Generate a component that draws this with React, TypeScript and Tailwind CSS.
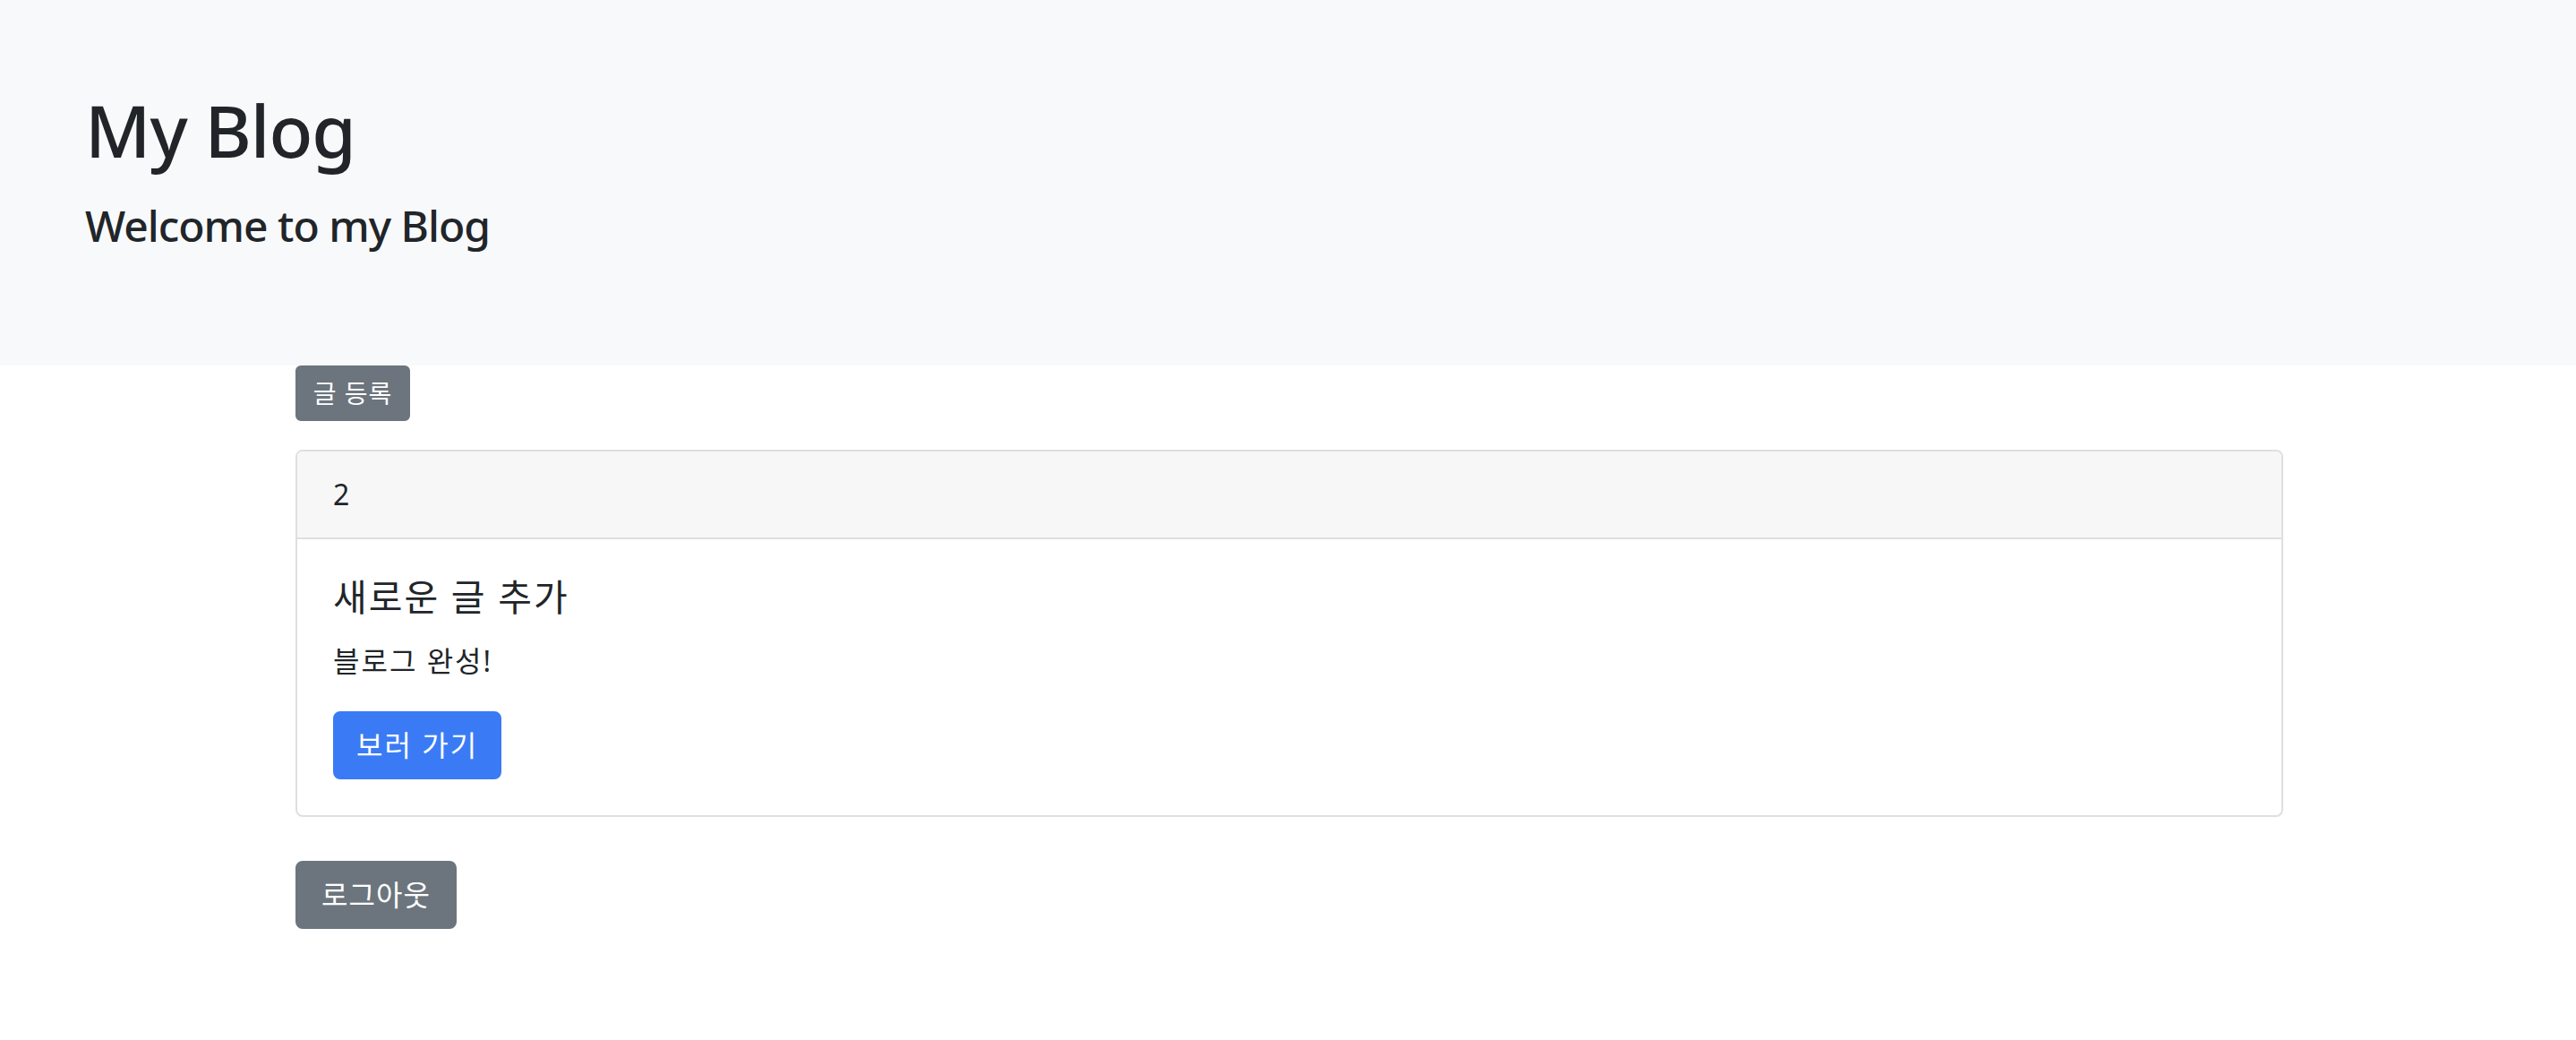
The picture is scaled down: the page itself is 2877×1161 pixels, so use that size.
export default function App() {
  const font = { fontFamily: '"Noto Sans", "Noto Sans CJK KR", sans-serif' }
  return (
    <div className="min-h-[1161px] bg-white text-[#212529]" style={font}>
      {/* Jumbotron */}
      <header className="h-[408px] bg-[#f8f9fa] pl-[95px] pt-[97px]">
        <h1 className="text-[80px] leading-[96px] font-medium tracking-[-1px]">My Blog</h1>
        <h4 className="mt-[30px] text-[48px] leading-[57.6px] font-medium tracking-[-1px]">Welcome to my Blog</h4>
      </header>

      <main className="ml-[330px] w-[2220px]">
        <button className="h-[62px] w-[128px] rounded-[6px] border-2 border-[#6c757d] bg-[#6c757d] text-[28px] leading-[42px] tracking-[1px] text-white">
          글 등록
        </button>

        {/* Card */}
        <div className="mt-[32px] rounded-[8px] border-2 border-[#dfdfdf] overflow-hidden">
          <div className="bg-[#f7f7f7] border-b-2 border-[#dfdfdf] px-[40px] py-[24px] text-[32px] leading-[48px]">
            2
          </div>
          <div className="p-[40px]">
            <h5 className="text-[41px] leading-[48px] tracking-[2px] mb-[24px]">새로운 글 추가</h5>
            <p className="text-[32px] leading-[48px] tracking-[2px] mb-[32px]">블로그 완성!</p>
            <button className="h-[76px] rounded-[8px] border-2 border-[#3a7bf5] bg-[#3a7bf5] px-[24px] text-[32px] leading-[48px] tracking-[2px] text-white">
              보러 가기
            </button>
          </div>
        </div>

        <button className="mt-[49px] h-[76px] w-[180px] rounded-[8px] border-2 border-[#6c757d] bg-[#6c757d] text-[32px] leading-[48px] tracking-[1px] text-white">
          로그아웃
        </button>
      </main>
    </div>
  )
}
